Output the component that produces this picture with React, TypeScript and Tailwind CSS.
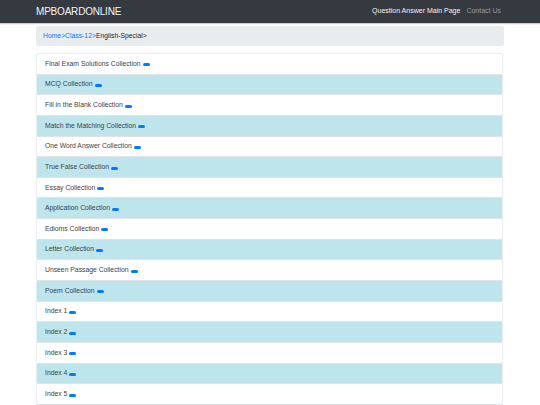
import React from 'react';

const items = [
  'Final Exam Solutions Collection',
  'MCQ Collection',
  'Fill in the Blank Collection',
  'Match the Matching Collection',
  'One Word Answer Collection',
  'True False Collection',
  'Essay Collection',
  'Application Collection',
  'Edioms Collection',
  'Letter Collection',
  'Unseen Passage Collection',
  'Poem Collection',
  'Index 1',
  'Index 2',
  'Index 3',
  'Index 4',
  'Index 5',
];

export default function App() {
  return (
    <div className="min-h-[405px] bg-white font-['Liberation_Sans',Arial,sans-serif] text-[#212529]">
      <nav className="h-[23px] bg-[#343a40] flex items-center justify-between pl-[36px] pr-[39px] shadow-[0_1px_1px_rgba(0,0,0,0.2)]">
        <span className="text-[#f4f4f4] text-[10px] tracking-[-0.2px]">MPBOARDONLINE</span>
        <div className="flex items-center gap-[6px] text-[7px]">
          <span className="text-[#f4f4f4]">Question Answer Main Page</span>
          <span className="text-[#9a9da0]">Contact Us</span>
        </div>
      </nav>
      <div className="mx-[36px] mt-[3px]">
        <div className="h-[20px] bg-[#e9ecef] rounded-[2px] flex items-center px-[7px] text-[6.8px]">
          <span className="text-[#007bff]">Home&gt;</span>
          <span className="text-[#007bff]">Class-12&gt;</span>
          <span>English-Special&gt;</span>
        </div>
        <ul className="mt-[7px] mr-[1px] border border-[#eceff1] rounded-[2px] shadow-[0_0_2px_rgba(0,0,0,0.06)]">
          {items.map((t, i) => (
            <li
              key={t}
              className={`h-[20.65px] flex items-center pl-[8px] text-[6.8px] border-b border-[#dfe3e6] ${
                i % 2 === 1 ? 'bg-[#bee5eb]' : 'bg-white'
              }`}
            >
              <span className="text-[#3d4247]">{t}</span>
              <span className="ml-[2px] mt-[2px] inline-block w-[7px] h-[3px] rounded-full bg-[#007bff]" />
            </li>
          ))}
        </ul>
      </div>
    </div>
  );
}
